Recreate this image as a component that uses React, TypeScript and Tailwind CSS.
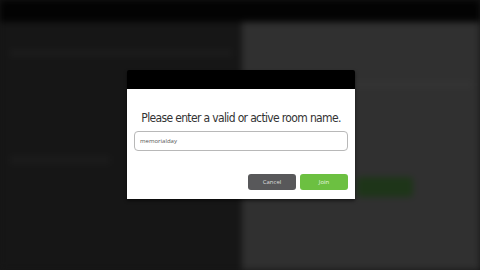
import React from "react";

export default function App() {
  return (
    <div className="relative w-[480px] h-[270px] overflow-hidden bg-[#161616]" style={{ fontFamily: '"Open Sans", sans-serif' }}>
      {/* blurred background app */}
      <div className="absolute inset-0 flex flex-col blur-[3px]">
        <div className="h-[22px] bg-[#030303] shrink-0" />
        <div className="flex flex-1">
          <div className="w-[242px] bg-[#161616] flex flex-col pt-[20px]">
            <div className="mt-[8px] h-[6px] mx-[10px] bg-[#1c1c1c]" />
            <div className="mt-[100px] h-[8px] ml-[10px] w-[100px] bg-[#1b1b1b]" />
          </div>
          <div className="flex-1 bg-[#303030] flex flex-col pl-[110px] pt-[60px]">
            <div className="h-[5px] w-[120px] bg-[#353535]" />
            <div className="mt-[90px] ml-[5px] h-[20px] w-[56px] rounded bg-[#1e3519]" />
          </div>
        </div>
      </div>
      {/* modal */}
      <div className="absolute left-[127px] top-[70px] w-[228px] h-[129px] flex flex-col shadow-[0_2px_3px_rgba(0,0,0,0.5)]">
        <div className="h-[19px] bg-black rounded-t-[2px]" />
        <div className="flex-1 bg-white flex flex-col px-[7px]">
          <div
            className="mt-[21px] text-center whitespace-nowrap text-[12px] leading-[16px] text-[#333] tracking-[-0.65px]"
            style={{ fontFamily: '"DejaVu Sans Condensed", Roboto, sans-serif' }}
          >
            Please enter a valid or active room name.
          </div>
          <div className="mt-[5px] h-[20px] border border-[#b8b8b8] rounded-[4px] flex items-center px-[5px] text-[6px] text-[#555]">
            memorialday
          </div>
          <div className="mt-[23px] flex justify-end gap-[4px]">
            <div className="w-[48px] h-[16px] rounded-[3px] bg-[#58585a] flex items-center justify-center text-[6px] text-[#ddd]">
              Cancel
            </div>
            <div className="w-[48px] h-[16px] rounded-[3px] bg-[#6cc041] flex items-center justify-center text-[6px] text-[#e8f5e0]">
              Join
            </div>
          </div>
        </div>
      </div>
    </div>
  );
}
